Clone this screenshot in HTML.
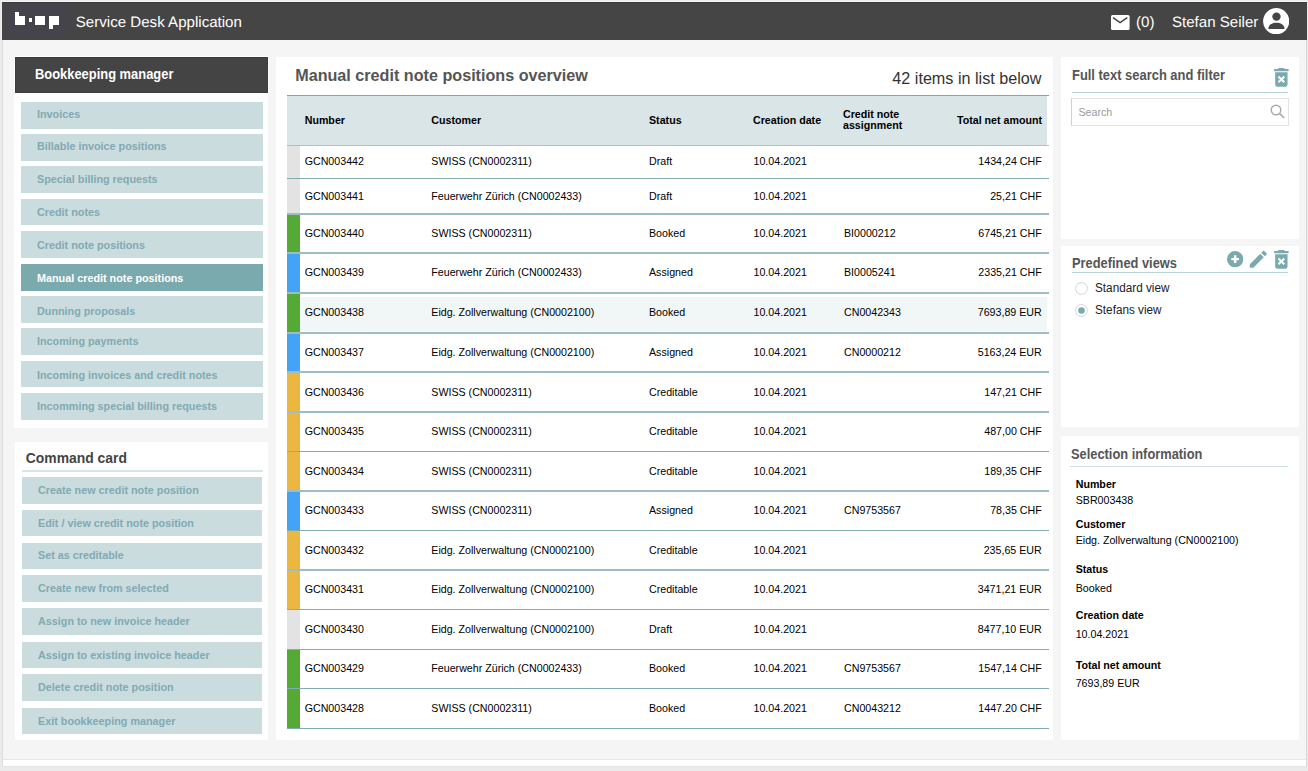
<!DOCTYPE html><html><head><meta charset="utf-8"><style>
*{margin:0;padding:0;box-sizing:border-box}
html,body{width:1308px;height:771px;overflow:hidden;background:#ebebeb;font-family:"Liberation Sans", sans-serif;position:relative}
.a{position:absolute}
.t{position:absolute;white-space:nowrap;line-height:1}
</style></head><body><div class="a" style="left:2.00px;top:1.00px;width:1304.50px;height:1.00px;background:#f8f8f8"></div>
<div class="a" style="left:2.00px;top:2.00px;width:1304.50px;height:758.00px;background:#f5f5f5;border-left:1px solid #dcdcdc;border-right:1px solid #d6d6d6;border-bottom:1px solid #e6e6e6"></div>
<div class="a" style="left:2.00px;top:760.00px;width:1304.50px;height:7.00px;background:#fff;border-left:1px solid #dcdcdc;border-right:1px solid #d6d6d6;border-bottom:1px solid #e4e4e4"></div>
<div class="a" style="left:2.00px;top:2.00px;width:1304.50px;height:37.70px;background:#454545;border-top:1px solid #3b3b3b"></div>
<div class="a" style="left:5.00px;top:4.00px;width:65.00px;height:31.00px;background:#45434b"></div>
<div class="a" style="left:14.80px;top:12.00px;width:3.90px;height:12.90px;background:#fff"></div>
<div class="a" style="left:14.80px;top:16.00px;width:10.30px;height:8.90px;background:#fff"></div>
<div class="a" style="left:28.60px;top:18.30px;width:3.50px;height:3.50px;background:#fff"></div>
<div class="a" style="left:35.40px;top:16.00px;width:10.10px;height:8.90px;background:#fff"></div>
<div class="a" style="left:49.00px;top:16.00px;width:10.20px;height:8.90px;background:#fff"></div>
<div class="a" style="left:49.00px;top:24.00px;width:3.50px;height:4.80px;background:#fff"></div>
<div class="t" style="left:75.80px;top:14.52px;font-size:15.1px;color:#fff;text-rendering:geometricPrecision">Service Desk Application</div>
<svg class="a" style="left:1111px;top:14.9px" width="19" height="15" viewBox="0 0 19 15"><rect x="0" y="0" width="18.6" height="15" rx="1.6" fill="#fff"/><polyline points="2,2.6 9.1,7.6 16.3,2.6" fill="none" stroke="#454545" stroke-width="1.5"/></svg>
<div class="t" style="left:1136.00px;top:14.62px;font-size:15.1px;color:#fff;text-rendering:geometricPrecision">(0)</div>
<div class="t" style="left:1171.90px;top:14.62px;font-size:15.1px;color:#fff;text-rendering:geometricPrecision">Stefan Seiler</div>
<svg class="a" style="left:1262.8px;top:7.8px" width="26.4" height="26.4" viewBox="0 0 26.4 26.4"><circle cx="13.2" cy="13.2" r="13.1" fill="#fff"/><circle cx="13.5" cy="8.6" r="4.2" fill="#454545"/><path d="M5.4 20.9 C5.4 16.3 9.5 14.7 13.4 14.7 C17.3 14.7 21.5 16.3 21.5 20.9 Z" fill="#454545"/></svg>
<div class="a" style="left:14.00px;top:57.00px;width:254.00px;height:371.00px;background:#fff"></div>
<div class="a" style="left:14.00px;top:56.00px;width:255.00px;height:38.00px;background:#fff"></div>
<div class="a" style="left:15.00px;top:57.00px;width:253.00px;height:36.00px;background:#444;border-top:1px solid #393939;border-left:1px solid #3d3d3d;border-bottom:1px solid #3d3d3d;border-right:1px solid #3d3d3d"></div>
<div class="t" style="left:35.10px;top:68.03px;font-size:13.9px;font-weight:bold;transform:scaleX(0.929);transform-origin:0 0;color:#fff">Bookkeeping manager</div>
<div class="a" style="left:21.00px;top:101.80px;width:242.10px;height:26.80px;background:#cbdcdf"></div>
<div class="t" style="left:37.00px;top:109.06px;font-size:10.8px;font-weight:bold;color:#80aab2">Invoices</div>
<div class="a" style="left:21.00px;top:133.60px;width:242.10px;height:27.30px;background:#cbdcdf"></div>
<div class="t" style="left:37.00px;top:140.76px;font-size:10.8px;font-weight:bold;color:#80aab2">Billable invoice positions</div>
<div class="a" style="left:21.00px;top:165.90px;width:242.10px;height:27.30px;background:#cbdcdf"></div>
<div class="t" style="left:37.00px;top:174.26px;font-size:10.8px;font-weight:bold;color:#80aab2">Special billing requests</div>
<div class="a" style="left:21.00px;top:198.50px;width:242.10px;height:26.70px;background:#cbdcdf"></div>
<div class="t" style="left:37.00px;top:206.76px;font-size:10.8px;font-weight:bold;color:#80aab2">Credit notes</div>
<div class="a" style="left:21.00px;top:230.90px;width:242.10px;height:26.90px;background:#cbdcdf"></div>
<div class="t" style="left:37.00px;top:239.66px;font-size:10.8px;font-weight:bold;color:#80aab2">Credit note positions</div>
<div class="a" style="left:21.00px;top:264.10px;width:242.10px;height:26.50px;background:#7aa9ae"></div>
<div class="t" style="left:37.00px;top:272.66px;font-size:10.8px;font-weight:bold;color:#fff">Manual credit note positions</div>
<div class="a" style="left:21.00px;top:296.30px;width:242.10px;height:26.80px;background:#cbdcdf"></div>
<div class="t" style="left:37.00px;top:305.56px;font-size:10.8px;font-weight:bold;color:#80aab2">Dunning proposals</div>
<div class="a" style="left:21.00px;top:328.40px;width:242.10px;height:26.60px;background:#cbdcdf"></div>
<div class="t" style="left:37.00px;top:335.66px;font-size:10.8px;font-weight:bold;color:#80aab2">Incoming payments</div>
<div class="a" style="left:21.00px;top:361.10px;width:242.10px;height:26.40px;background:#cbdcdf"></div>
<div class="t" style="left:37.00px;top:369.76px;font-size:10.8px;font-weight:bold;color:#80aab2">Incoming invoices and credit notes</div>
<div class="a" style="left:21.00px;top:393.30px;width:242.10px;height:26.70px;background:#cbdcdf"></div>
<div class="t" style="left:37.00px;top:400.66px;font-size:10.8px;font-weight:bold;color:#80aab2">Incomming special billing requests</div>
<div class="a" style="left:15.00px;top:442.00px;width:253.00px;height:298.00px;background:#fff"></div>
<div class="t" style="left:25.80px;top:452.03px;font-size:13.9px;font-weight:bold;color:#444">Command card</div>
<div class="a" style="left:21.80px;top:470.00px;width:241.20px;height:2.00px;background:#d5e5e8"></div>
<div class="a" style="left:22.10px;top:476.80px;width:239.80px;height:26.90px;background:#cbdcdf"></div>
<div class="t" style="left:38.00px;top:485.26px;font-size:10.8px;font-weight:bold;color:#80aab2">Create new credit note position</div>
<div class="a" style="left:22.10px;top:509.90px;width:239.80px;height:26.40px;background:#cbdcdf"></div>
<div class="t" style="left:38.00px;top:518.06px;font-size:10.8px;font-weight:bold;color:#80aab2">Edit / view credit note position</div>
<div class="a" style="left:22.10px;top:542.70px;width:239.80px;height:26.60px;background:#cbdcdf"></div>
<div class="t" style="left:38.00px;top:549.66px;font-size:10.8px;font-weight:bold;color:#80aab2">Set as creditable</div>
<div class="a" style="left:22.10px;top:574.90px;width:239.80px;height:27.10px;background:#cbdcdf"></div>
<div class="t" style="left:38.00px;top:583.26px;font-size:10.8px;font-weight:bold;color:#80aab2">Create new from selected</div>
<div class="a" style="left:22.10px;top:608.20px;width:239.80px;height:26.60px;background:#cbdcdf"></div>
<div class="t" style="left:38.00px;top:616.26px;font-size:10.8px;font-weight:bold;color:#80aab2">Assign to new invoice header</div>
<div class="a" style="left:22.10px;top:641.90px;width:239.80px;height:26.60px;background:#cbdcdf"></div>
<div class="t" style="left:38.00px;top:649.66px;font-size:10.8px;font-weight:bold;color:#80aab2">Assign to existing invoice header</div>
<div class="a" style="left:22.10px;top:674.40px;width:239.80px;height:26.90px;background:#cbdcdf"></div>
<div class="t" style="left:38.00px;top:682.06px;font-size:10.8px;font-weight:bold;color:#80aab2">Delete credit note position</div>
<div class="a" style="left:22.10px;top:707.90px;width:239.80px;height:26.60px;background:#cbdcdf"></div>
<div class="t" style="left:38.00px;top:716.06px;font-size:10.8px;font-weight:bold;color:#80aab2">Exit bookkeeping manager</div>
<div class="a" style="left:276.40px;top:56.90px;width:776.20px;height:682.80px;background:#fff"></div>
<div class="t" style="left:295.20px;top:66.72px;font-size:16.16px;font-weight:bold;color:#555">Manual credit note positions overview</div>
<div class="t" style="right:266.60px;top:69.72px;font-size:16.16px;color:#333">42 items in list below</div>
<div class="a" style="left:286.60px;top:95.00px;width:762.00px;height:1.00px;background:#7aaab0"></div>
<div class="a" style="left:286.60px;top:96.00px;width:760.20px;height:49.00px;background:#d9e5e7"></div>
<div class="t" style="left:304.70px;top:115.17px;font-size:10.67px;font-weight:bold;color:#000">Number</div>
<div class="t" style="left:431.30px;top:115.17px;font-size:10.67px;font-weight:bold;color:#000">Customer</div>
<div class="t" style="left:649.00px;top:115.17px;font-size:10.67px;font-weight:bold;color:#000">Status</div>
<div class="t" style="left:753.00px;top:115.17px;font-size:10.67px;font-weight:bold;color:#000">Creation date</div>
<div class="t" style="left:843.00px;top:108.87px;font-size:10.67px;font-weight:bold;color:#000">Credit note</div>
<div class="t" style="left:843.00px;top:119.67px;font-size:10.67px;font-weight:bold;color:#000">assignment</div>
<div class="t" style="right:266.00px;top:115.17px;font-size:10.67px;font-weight:bold;color:#000">Total net amount</div>
<div class="a" style="left:300.00px;top:297.00px;width:746.80px;height:34.00px;background:#f1f6f7"></div>
<div class="a" style="left:286.60px;top:146.00px;width:13.30px;height:32.00px;background:#e3e3e3"></div>
<div class="t" style="left:304.70px;top:155.97px;font-size:10.67px;color:#000">GCN003442</div>
<div class="t" style="left:431.30px;top:155.97px;font-size:10.67px;color:#000">SWISS (CN0002311)</div>
<div class="t" style="left:649.00px;top:155.97px;font-size:10.67px;color:#000">Draft</div>
<div class="t" style="left:753.50px;top:155.97px;font-size:10.67px;color:#000">10.04.2021</div>
<div class="t" style="right:266.30px;top:155.97px;font-size:10.67px;color:#000">1434,24 CHF</div>
<div class="a" style="left:286.60px;top:179.00px;width:13.30px;height:34.00px;background:#e3e3e3"></div>
<div class="t" style="left:304.70px;top:190.97px;font-size:10.67px;color:#000">GCN003441</div>
<div class="t" style="left:431.30px;top:190.97px;font-size:10.67px;color:#000">Feuerwehr Zürich (CN0002433)</div>
<div class="t" style="left:649.00px;top:190.97px;font-size:10.67px;color:#000">Draft</div>
<div class="t" style="left:753.50px;top:190.97px;font-size:10.67px;color:#000">10.04.2021</div>
<div class="t" style="right:266.30px;top:190.97px;font-size:10.67px;color:#000">25,21 CHF</div>
<div class="a" style="left:286.60px;top:215.00px;width:13.30px;height:37.00px;background:#55aa35"></div>
<div class="t" style="left:304.70px;top:227.97px;font-size:10.67px;color:#000">GCN003440</div>
<div class="t" style="left:431.30px;top:227.97px;font-size:10.67px;color:#000">SWISS (CN0002311)</div>
<div class="t" style="left:649.00px;top:227.97px;font-size:10.67px;color:#000">Booked</div>
<div class="t" style="left:753.50px;top:227.97px;font-size:10.67px;color:#000">10.04.2021</div>
<div class="t" style="left:844.00px;top:227.97px;font-size:10.67px;color:#000">BI0000212</div>
<div class="t" style="right:266.30px;top:227.97px;font-size:10.67px;color:#000">6745,21 CHF</div>
<div class="a" style="left:286.60px;top:254.00px;width:13.30px;height:38.00px;background:#45a3f5"></div>
<div class="t" style="left:304.70px;top:266.97px;font-size:10.67px;color:#000">GCN003439</div>
<div class="t" style="left:431.30px;top:266.97px;font-size:10.67px;color:#000">Feuerwehr Zürich (CN0002433)</div>
<div class="t" style="left:649.00px;top:266.97px;font-size:10.67px;color:#000">Assigned</div>
<div class="t" style="left:753.50px;top:266.97px;font-size:10.67px;color:#000">10.04.2021</div>
<div class="t" style="left:844.00px;top:266.97px;font-size:10.67px;color:#000">BI0005241</div>
<div class="t" style="right:266.30px;top:266.97px;font-size:10.67px;color:#000">2335,21 CHF</div>
<div class="a" style="left:286.60px;top:294.00px;width:13.30px;height:38.00px;background:#55aa35"></div>
<div class="t" style="left:304.70px;top:306.97px;font-size:10.67px;color:#000">GCN003438</div>
<div class="t" style="left:431.30px;top:306.97px;font-size:10.67px;color:#000">Eidg. Zollverwaltung (CN0002100)</div>
<div class="t" style="left:649.00px;top:306.97px;font-size:10.67px;color:#000">Booked</div>
<div class="t" style="left:753.50px;top:306.97px;font-size:10.67px;color:#000">10.04.2021</div>
<div class="t" style="left:844.00px;top:306.97px;font-size:10.67px;color:#000">CN0042343</div>
<div class="t" style="right:266.30px;top:306.97px;font-size:10.67px;color:#000">7693,89 EUR</div>
<div class="a" style="left:286.60px;top:334.00px;width:13.30px;height:37.00px;background:#45a3f5"></div>
<div class="t" style="left:304.70px;top:346.97px;font-size:10.67px;color:#000">GCN003437</div>
<div class="t" style="left:431.30px;top:346.97px;font-size:10.67px;color:#000">Eidg. Zollverwaltung (CN0002100)</div>
<div class="t" style="left:649.00px;top:346.97px;font-size:10.67px;color:#000">Assigned</div>
<div class="t" style="left:753.50px;top:346.97px;font-size:10.67px;color:#000">10.04.2021</div>
<div class="t" style="left:844.00px;top:346.97px;font-size:10.67px;color:#000">CN0000212</div>
<div class="t" style="right:266.30px;top:346.97px;font-size:10.67px;color:#000">5163,24 EUR</div>
<div class="a" style="left:286.60px;top:373.00px;width:13.30px;height:38.00px;background:#ecb740"></div>
<div class="t" style="left:304.70px;top:386.97px;font-size:10.67px;color:#000">GCN003436</div>
<div class="t" style="left:431.30px;top:386.97px;font-size:10.67px;color:#000">SWISS (CN0002311)</div>
<div class="t" style="left:649.00px;top:386.97px;font-size:10.67px;color:#000">Creditable</div>
<div class="t" style="left:753.50px;top:386.97px;font-size:10.67px;color:#000">10.04.2021</div>
<div class="t" style="right:266.30px;top:386.97px;font-size:10.67px;color:#000">147,21 CHF</div>
<div class="a" style="left:286.60px;top:413.00px;width:13.30px;height:38.00px;background:#ecb740"></div>
<div class="t" style="left:304.70px;top:425.97px;font-size:10.67px;color:#000">GCN003435</div>
<div class="t" style="left:431.30px;top:425.97px;font-size:10.67px;color:#000">SWISS (CN0002311)</div>
<div class="t" style="left:649.00px;top:425.97px;font-size:10.67px;color:#000">Creditable</div>
<div class="t" style="left:753.50px;top:425.97px;font-size:10.67px;color:#000">10.04.2021</div>
<div class="t" style="right:266.30px;top:425.97px;font-size:10.67px;color:#000">487,00 CHF</div>
<div class="a" style="left:286.60px;top:452.00px;width:13.30px;height:38.00px;background:#ecb740"></div>
<div class="t" style="left:304.70px;top:465.97px;font-size:10.67px;color:#000">GCN003434</div>
<div class="t" style="left:431.30px;top:465.97px;font-size:10.67px;color:#000">SWISS (CN0002311)</div>
<div class="t" style="left:649.00px;top:465.97px;font-size:10.67px;color:#000">Creditable</div>
<div class="t" style="left:753.50px;top:465.97px;font-size:10.67px;color:#000">10.04.2021</div>
<div class="t" style="right:266.30px;top:465.97px;font-size:10.67px;color:#000">189,35 CHF</div>
<div class="a" style="left:286.60px;top:492.00px;width:13.30px;height:38.00px;background:#45a3f5"></div>
<div class="t" style="left:304.70px;top:504.97px;font-size:10.67px;color:#000">GCN003433</div>
<div class="t" style="left:431.30px;top:504.97px;font-size:10.67px;color:#000">SWISS (CN0002311)</div>
<div class="t" style="left:649.00px;top:504.97px;font-size:10.67px;color:#000">Assigned</div>
<div class="t" style="left:753.50px;top:504.97px;font-size:10.67px;color:#000">10.04.2021</div>
<div class="t" style="left:844.00px;top:504.97px;font-size:10.67px;color:#000">CN9753567</div>
<div class="t" style="right:266.30px;top:504.97px;font-size:10.67px;color:#000">78,35 CHF</div>
<div class="a" style="left:286.60px;top:531.00px;width:13.30px;height:38.00px;background:#ecb740"></div>
<div class="t" style="left:304.70px;top:544.97px;font-size:10.67px;color:#000">GCN003432</div>
<div class="t" style="left:431.30px;top:544.97px;font-size:10.67px;color:#000">Eidg. Zollverwaltung (CN0002100)</div>
<div class="t" style="left:649.00px;top:544.97px;font-size:10.67px;color:#000">Creditable</div>
<div class="t" style="left:753.50px;top:544.97px;font-size:10.67px;color:#000">10.04.2021</div>
<div class="t" style="right:266.30px;top:544.97px;font-size:10.67px;color:#000">235,65 EUR</div>
<div class="a" style="left:286.60px;top:571.00px;width:13.30px;height:38.00px;background:#ecb740"></div>
<div class="t" style="left:304.70px;top:583.97px;font-size:10.67px;color:#000">GCN003431</div>
<div class="t" style="left:431.30px;top:583.97px;font-size:10.67px;color:#000">Eidg. Zollverwaltung (CN0002100)</div>
<div class="t" style="left:649.00px;top:583.97px;font-size:10.67px;color:#000">Creditable</div>
<div class="t" style="left:753.50px;top:583.97px;font-size:10.67px;color:#000">10.04.2021</div>
<div class="t" style="right:266.30px;top:583.97px;font-size:10.67px;color:#000">3471,21 EUR</div>
<div class="a" style="left:286.60px;top:610.00px;width:13.30px;height:39.00px;background:#e3e3e3"></div>
<div class="t" style="left:304.70px;top:623.97px;font-size:10.67px;color:#000">GCN003430</div>
<div class="t" style="left:431.30px;top:623.97px;font-size:10.67px;color:#000">Eidg. Zollverwaltung (CN0002100)</div>
<div class="t" style="left:649.00px;top:623.97px;font-size:10.67px;color:#000">Draft</div>
<div class="t" style="left:753.50px;top:623.97px;font-size:10.67px;color:#000">10.04.2021</div>
<div class="t" style="right:266.30px;top:623.97px;font-size:10.67px;color:#000">8477,10 EUR</div>
<div class="a" style="left:286.60px;top:650.00px;width:13.30px;height:38.00px;background:#55aa35"></div>
<div class="t" style="left:304.70px;top:662.97px;font-size:10.67px;color:#000">GCN003429</div>
<div class="t" style="left:431.30px;top:662.97px;font-size:10.67px;color:#000">Feuerwehr Zürich (CN0002433)</div>
<div class="t" style="left:649.00px;top:662.97px;font-size:10.67px;color:#000">Booked</div>
<div class="t" style="left:753.50px;top:662.97px;font-size:10.67px;color:#000">10.04.2021</div>
<div class="t" style="left:844.00px;top:662.97px;font-size:10.67px;color:#000">CN9753567</div>
<div class="t" style="right:266.30px;top:662.97px;font-size:10.67px;color:#000">1547,14 CHF</div>
<div class="a" style="left:286.60px;top:689.00px;width:13.30px;height:39.00px;background:#55aa35"></div>
<div class="t" style="left:304.70px;top:702.97px;font-size:10.67px;color:#000">GCN003428</div>
<div class="t" style="left:431.30px;top:702.97px;font-size:10.67px;color:#000">SWISS (CN0002311)</div>
<div class="t" style="left:649.00px;top:702.97px;font-size:10.67px;color:#000">Booked</div>
<div class="t" style="left:753.50px;top:702.97px;font-size:10.67px;color:#000">10.04.2021</div>
<div class="t" style="left:844.00px;top:702.97px;font-size:10.67px;color:#000">CN0043212</div>
<div class="t" style="right:266.30px;top:702.97px;font-size:10.67px;color:#000">1447.20 CHF</div>
<div class="a" style="left:286.60px;top:145.00px;width:762.00px;height:1.00px;background:#a3c4c8"></div>
<div class="a" style="left:286.60px;top:178.00px;width:762.00px;height:1.00px;background:#80acb2"></div>
<div class="a" style="left:286.60px;top:213.00px;width:762.00px;height:2.00px;background:#9cbec2"></div>
<div class="a" style="left:286.60px;top:252.00px;width:762.00px;height:2.00px;background:#9cbec2"></div>
<div class="a" style="left:286.60px;top:292.00px;width:762.00px;height:2.00px;background:#9cbec2"></div>
<div class="a" style="left:286.60px;top:332.00px;width:762.00px;height:2.00px;background:#9cbec2"></div>
<div class="a" style="left:286.60px;top:371.00px;width:762.00px;height:2.00px;background:#9cbec2"></div>
<div class="a" style="left:286.60px;top:411.00px;width:762.00px;height:2.00px;background:#9cbec2"></div>
<div class="a" style="left:286.60px;top:451.00px;width:762.00px;height:1.00px;background:#80acb2"></div>
<div class="a" style="left:286.60px;top:490.00px;width:762.00px;height:2.00px;background:#9cbec2"></div>
<div class="a" style="left:286.60px;top:530.00px;width:762.00px;height:1.00px;background:#80acb2"></div>
<div class="a" style="left:286.60px;top:569.00px;width:762.00px;height:2.00px;background:#9cbec2"></div>
<div class="a" style="left:286.60px;top:609.00px;width:762.00px;height:1.00px;background:#80acb2"></div>
<div class="a" style="left:286.60px;top:649.00px;width:762.00px;height:1.00px;background:#80acb2"></div>
<div class="a" style="left:286.60px;top:688.00px;width:762.00px;height:1.00px;background:#80acb2"></div>
<div class="a" style="left:286.60px;top:728.00px;width:762.00px;height:1.00px;background:#80acb2"></div>
<div class="a" style="left:1060.90px;top:57.00px;width:238.00px;height:181.60px;background:#fff"></div>
<div class="t" style="left:1071.50px;top:69.03px;font-size:13.9px;font-weight:bold;transform:scaleX(0.93);transform-origin:0 0;color:#555">Full text search and filter</div>
<div class="a" style="left:1071.50px;top:91.80px;width:216.50px;height:1.30px;background:#b3d0d3"></div>
<svg class="a" style="left:1268.75px;top:64.9px" width="24.72" height="24.72" viewBox="0 0 24 24"><path d="M6 19c0 1.1.9 2 2 2h8c1.1 0 2-.9 2-2V7H6v12zm2.46-7.12l1.41-1.41L12 12.59l2.12-2.12 1.41 1.41L13.41 14l2.12 2.12-1.41 1.41L12 15.41l-2.12 2.12-1.41-1.41L10.59 14l-2.13-2.12zM15.5 4l-1-1h-5l-1 1H5v2h14V4z" fill="#7aa9ae"/></svg>
<div class="a" style="left:1071.00px;top:98.00px;width:218.00px;height:28.00px;background:#fff;border:1px solid #e3e3e3;border-left-color:#d0d0d0"></div>
<div class="t" style="left:1078.50px;top:107.27px;font-size:10.67px;color:#9a9a9a">Search</div>
<svg class="a" style="left:1269.8px;top:104.1px" width="16" height="15" viewBox="0 0 16 15"><circle cx="6" cy="6" r="4.8" fill="none" stroke="#aaa" stroke-width="1.4"/><path d="M9.4 9.4 L14.3 14.0" stroke="#aaa" stroke-width="1.6"/></svg>
<div class="a" style="left:1060.90px;top:245.70px;width:238.00px;height:181.50px;background:#fff"></div>
<div class="t" style="left:1072.00px;top:257.03px;font-size:13.9px;font-weight:bold;transform:scaleX(0.925);transform-origin:0 0;color:#555">Predefined views</div>
<div class="a" style="left:1071.50px;top:271.80px;width:216.50px;height:1.30px;background:#b8d2d5"></div>
<svg class="a" style="left:1227.15px;top:250.9px" width="16.3" height="16.3" viewBox="0 0 16.3 16.3"><circle cx="8.15" cy="8.15" r="8.15" fill="#7aa9ae"/><path d="M8.15 4.2 V12.0 M4.3 8.15 H12.0" stroke="#fff" stroke-width="2.4"/></svg>
<svg class="a" style="left:1247.3px;top:247.9px" width="22.6" height="22.6" viewBox="0 0 24 24"><path d="M3 17.25V21h3.75L17.81 9.94l-3.75-3.75L3 17.25zM20.71 7.04c.39-.39.39-1.02 0-1.41l-2.34-2.34c-.39-.39-1.02-.39-1.41 0l-1.83 1.83 3.75 3.75 1.83-1.83z" fill="#7aa9ae"/></svg>
<svg class="a" style="left:1268.75px;top:246.9px" width="24.72" height="24.72" viewBox="0 0 24 24"><path d="M6 19c0 1.1.9 2 2 2h8c1.1 0 2-.9 2-2V7H6v12zm2.46-7.12l1.41-1.41L12 12.59l2.12-2.12 1.41 1.41L13.41 14l2.12 2.12-1.41 1.41L12 15.41l-2.12 2.12-1.41-1.41L10.59 14l-2.13-2.12zM15.5 4l-1-1h-5l-1 1H5v2h14V4z" fill="#7aa9ae"/></svg>
<svg class="a" style="left:1074.5px;top:281.5px" width="13" height="13" viewBox="0 0 13 13"><circle cx="6.5" cy="6.5" r="5.9" fill="#fff" stroke="#c9d9dc" stroke-width="1"/></svg>
<div class="t" style="left:1095.40px;top:282.04px;font-size:12px;transform:scaleX(0.979);transform-origin:0 0;color:#222">Standard view</div>
<svg class="a" style="left:1074.5px;top:303.5px" width="13" height="13" viewBox="0 0 13 13"><circle cx="6.5" cy="6.5" r="5.9" fill="#fff" stroke="#c9d9dc" stroke-width="1"/><circle cx="6.5" cy="6.5" r="3.3" fill="#7aa9ae"/></svg>
<div class="t" style="left:1095.40px;top:304.04px;font-size:12px;transform:scaleX(0.979);transform-origin:0 0;color:#222">Stefans view</div>
<div class="a" style="left:1060.80px;top:436.40px;width:238.10px;height:304.10px;background:#fff"></div>
<div class="t" style="left:1071.00px;top:448.03px;font-size:13.9px;font-weight:bold;transform:scaleX(0.925);transform-origin:0 0;color:#555">Selection information</div>
<div class="a" style="left:1069.80px;top:466.00px;width:218.20px;height:1.00px;background:#cfe0e3"></div>
<div class="t" style="left:1075.70px;top:478.77px;font-size:10.67px;font-weight:bold;color:#000">Number</div>
<div class="t" style="left:1075.70px;top:494.67px;font-size:10.67px;color:#000">SBR003438</div>
<div class="t" style="left:1075.70px;top:519.17px;font-size:10.67px;font-weight:bold;color:#000">Customer</div>
<div class="t" style="left:1075.70px;top:534.77px;font-size:10.67px;color:#000">Eidg. Zollverwaltung (CN0002100)</div>
<div class="t" style="left:1075.70px;top:563.97px;font-size:10.67px;font-weight:bold;color:#000">Status</div>
<div class="t" style="left:1075.70px;top:582.77px;font-size:10.67px;color:#000">Booked</div>
<div class="t" style="left:1075.70px;top:609.97px;font-size:10.67px;font-weight:bold;color:#000">Creation date</div>
<div class="t" style="left:1075.70px;top:628.97px;font-size:10.67px;color:#000">10.04.2021</div>
<div class="t" style="left:1075.70px;top:659.67px;font-size:10.67px;font-weight:bold;color:#000">Total net amount</div>
<div class="t" style="left:1075.70px;top:678.17px;font-size:10.67px;color:#000">7693,89 EUR</div></body></html>
